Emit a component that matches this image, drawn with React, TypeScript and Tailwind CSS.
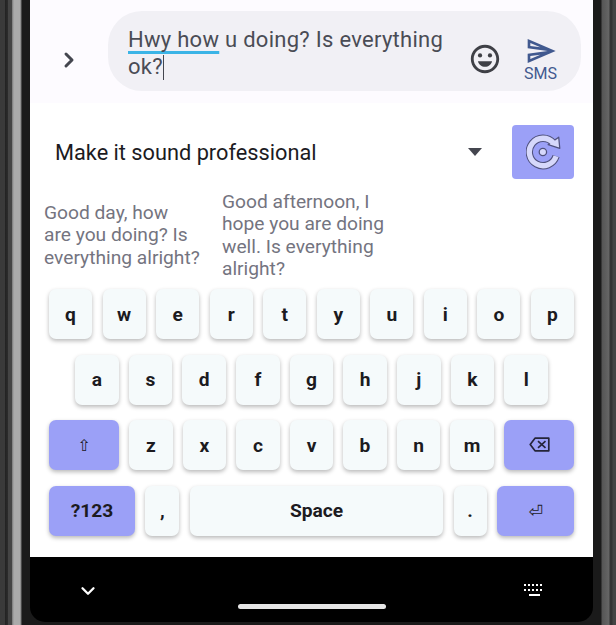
import type { ReactNode } from 'react';
import { ChevronDown, ChevronRight } from 'lucide-react';

const ROW_1 = ['q', 'w', 'e', 'r', 't', 'y', 'u', 'i', 'o', 'p'];
const ROW_2 = ['a', 's', 'd', 'f', 'g', 'h', 'j', 'k', 'l'];
const ROW_3 = ['z', 'x', 'c', 'v', 'b', 'n', 'm'];

function Key({ label, className = '' }: { label: string; className?: string }) {
  return (
    <div
      className={`h-[50px] pt-[2px] flex items-center justify-center rounded-[7px] bg-[#f5fafb] text-[19.2px] font-bold text-[#1c1b1f] shadow-[0_2px_4px_rgba(0,0,0,0.28)] ${className}`}
    >
      {label}
    </div>
  );
}

function ActionKey({ label, className = '', glyph = '' }: { label: ReactNode; className?: string; glyph?: string }) {
  return (
    <div
      className={`h-[50px] pt-[2px] flex items-center justify-center rounded-[7px] bg-[#9ba0f7] text-[#1c1b1f] shadow-[0_2px_4px_rgba(0,0,0,0.28)] ${
        glyph || 'text-[19.2px] font-bold'
      } ${className}`}
    >
      {label}
    </div>
  );
}

function EmojiIcon() {
  return (
    <svg width="34" height="34" viewBox="0 0 24 24" fill="#3f4046">
      <path d="M12 2C6.48 2 2 6.48 2 12s4.48 10 10 10 10-4.48 10-10S17.52 2 12 2zm0 18c-4.42 0-8-3.58-8-8s3.58-8 8-8 8 3.58 8 8-3.58 8-8 8z" />
      <circle cx="8.5" cy="9.5" r="1.5" />
      <circle cx="15.5" cy="9.5" r="1.5" />
      <path d="M7 13.5h10c-.6 2.4-2.6 4-5 4s-4.400-1.600-5-4z" />
    </svg>
  );
}

function SendIcon() {
  return (
    <svg width="32" height="32" viewBox="0 0 24 24" fill="#41598f">
      <path d="M4.010 6.030l7.510 3.220-7.520-1 .01-2.220m7.500 8.720L4 17.970v-2.220l7.510-1M2.010 3L2 10l15 2-15 2 .01 7L23 12 2.010 3z" />
    </svg>
  );
}

function RetryIcon() {
  const arc = 'M26 9.500 A13 13 0 1 0 28.500 22';
  return (
    <svg width="38" height="38" viewBox="0 0 36 36" fill="none" className="ml-[3px]">
      <path d={arc} stroke="#50527f" strokeWidth="7" />
      <path d="M21 11 L31 4 L32 14.500 Z" fill="#d6d8fb" stroke="#50527f" strokeWidth="1.200" strokeLinejoin="round" />
      <path d={arc} stroke="#d6d8fb" strokeWidth="5" />
      <circle cx="16" cy="18" r="3.500" fill="#d6d8fb" stroke="#50527f" strokeWidth="1.200" />
    </svg>
  );
}

function BackspaceIcon() {
  return (
    <svg width="21" height="15" viewBox="0 0 21 15" fill="none" stroke="#25253a" strokeWidth="1.700" className="-mt-[4px]">
      <path d="M6 1.200H19.800V13.800H6L1.200 7.500Z" strokeLinejoin="round" />
      <path d="M9 4.200L16.500 10.800M16.500 4.200L9 10.800" />
    </svg>
  );
}

function KeyboardIcon() {
  const dots = [0, 4, 8, 12, 16];
  return (
    <svg width="22" height="14" viewBox="0 0 22 14" fill="#ffffff">
      {dots.map((x) => (
        <rect key={`a${x}`} x={x + 1} y="0" width="2" height="2" />
      ))}
      {dots.map((x) => (
        <rect key={`b${x}`} x={x + 1} y="5" width="2" height="2" />
      ))}
      <rect x="6" y="10" width="11" height="2" />
    </svg>
  );
}

export default function App() {
  return (
    <div className="w-[616px] h-[625px] flex overflow-hidden bg-[#1a1a1a] font-['Roboto',sans-serif]">
      {/* Device frame, left */}
      <div className="w-[30px] bg-[linear-gradient(90deg,#3a3a3a_0,#3a3a3a_5px,#222_5px,#2c2c2c_8px,#444_8px,#444_12px,#777_12px,#aaa_14px,#aaa_20px,#777_21px,#1a1a1a_22px,#1a1a1a_30px)]" />

      <div className="w-[563px] h-[625px] flex flex-col">
        {/* Compose bar */}
        <div className="h-[103px] bg-[#fdfbff] flex items-start pt-[11px] pr-[12px]">
          <div className="w-[78px] h-[80px] flex items-center justify-center text-[#44464f] pt-[18px]">
            <ChevronRight size={24} strokeWidth={3} />
          </div>
          <div className="flex-1 h-[80px] rounded-[34px] bg-[#f1f0f5] flex pl-[20px] pr-[24px]">
            <div className="w-[325px] pt-[15px] text-[22px] tracking-[0.28px] leading-[27px] text-[#4a4c55]">
              <span className="underline decoration-[3px] decoration-[#3bb4e6] underline-offset-[4px] [text-decoration-skip-ink:none]">
                Hwy how
              </span>{' '}
              u doing? Is everything ok?
              <span className="inline-block w-px h-[25px] align-[-6px] bg-[#44464f]" />
            </div>
            <div className="ml-auto flex items-start">
              <div className="pt-[31px] mr-[22px]">
                <EmojiIcon />
              </div>
              <div className="pt-[24px] flex flex-col items-center text-[#41598f] text-[16px] leading-[16px]">
                <SendIcon />
                <span className="-mt-[1px]">SMS</span>
              </div>
            </div>
          </div>
        </div>

        {/* Tone picker */}
        <div className="flex-1 bg-white flex flex-col">
          <div className="flex items-center pt-[22px] pl-[25px] pr-[19px]">
            <span className="flex-1 text-[21.75px] leading-[27px] text-[#1c1b1f] pt-[1px]">Make it sound professional</span>
            <div className="w-0 h-0 mr-[30px] border-x-[7px] border-x-transparent border-t-[8px] border-t-[#44464f]" />
            <div className="w-[62px] h-[54px] rounded-[4px] bg-[#9ba0f7] flex items-center justify-center">
              <RetryIcon />
            </div>
          </div>

          {/* Suggestions */}
          <div className="h-[100px] flex items-center pl-[14px] pt-[13px] text-[19.2px] leading-[22.500px] text-[#74747f]">
            <div className="w-[178px]">
              Good day, how
              <br />
              are you doing? Is everything alright?
            </div>
            <div className="w-[172px]">Good afternoon, I hope you are doing well. Is everything alright?</div>
          </div>

          {/* Keyboard */}
          <div className="px-[19px] pt-[10px] flex flex-col gap-y-[15.500px]">
            <div className="grid grid-cols-10 gap-x-[10.500px]">
              {ROW_1.map((k) => (
                <Key key={k} label={k} />
              ))}
            </div>
            <div className="grid grid-cols-9 gap-x-[10px] px-[26px]">
              {ROW_2.map((k) => (
                <Key key={k} label={k} />
              ))}
            </div>
            <div className="flex gap-x-[10.400px]">
              <ActionKey label="⇧" glyph="font-['DejaVu_Sans',sans-serif] text-[16px]" className="w-[70px]" />
              {ROW_3.map((k) => (
                <Key key={k} label={k} className="flex-1" />
              ))}
              <ActionKey label={<BackspaceIcon />} glyph="text-[14px]" className="w-[70px]" />
            </div>
            <div className="flex gap-x-[10.400px]">
              <ActionKey label="?123" className="w-[86px]" />
              <Key label="," className="w-[34px]" />
              <Key label="Space" className="flex-1" />
              <Key label="." className="w-[33px]" />
              <ActionKey label="⏎" glyph="font-['DejaVu_Sans',sans-serif] text-[17px]" className="w-[77px]" />
            </div>
          </div>
        </div>

        {/* Nav bar */}
        <div className="h-[65px] mb-[3px] bg-black rounded-b-[15px] flex items-start justify-between pl-[47px] pr-[47px] text-white">
          <ChevronDown size={22} strokeWidth={2.500} className="mt-[23px]" />
          <div className="w-[148px] h-[5px] mt-[47px] ml-[1px] rounded-full bg-[#e6e6e6]" />
          <div className="mt-[27px] mr-[1px]">
            <KeyboardIcon />
          </div>
        </div>
      </div>

      {/* Device frame, right */}
      <div className="w-[23px] bg-[linear-gradient(90deg,#1a1a1a_0,#1a1a1a_8px,#555_9px,#666_16px,#333_17px,#333_19px,#444_20px,#444_23px)]" />
    </div>
  );
}
